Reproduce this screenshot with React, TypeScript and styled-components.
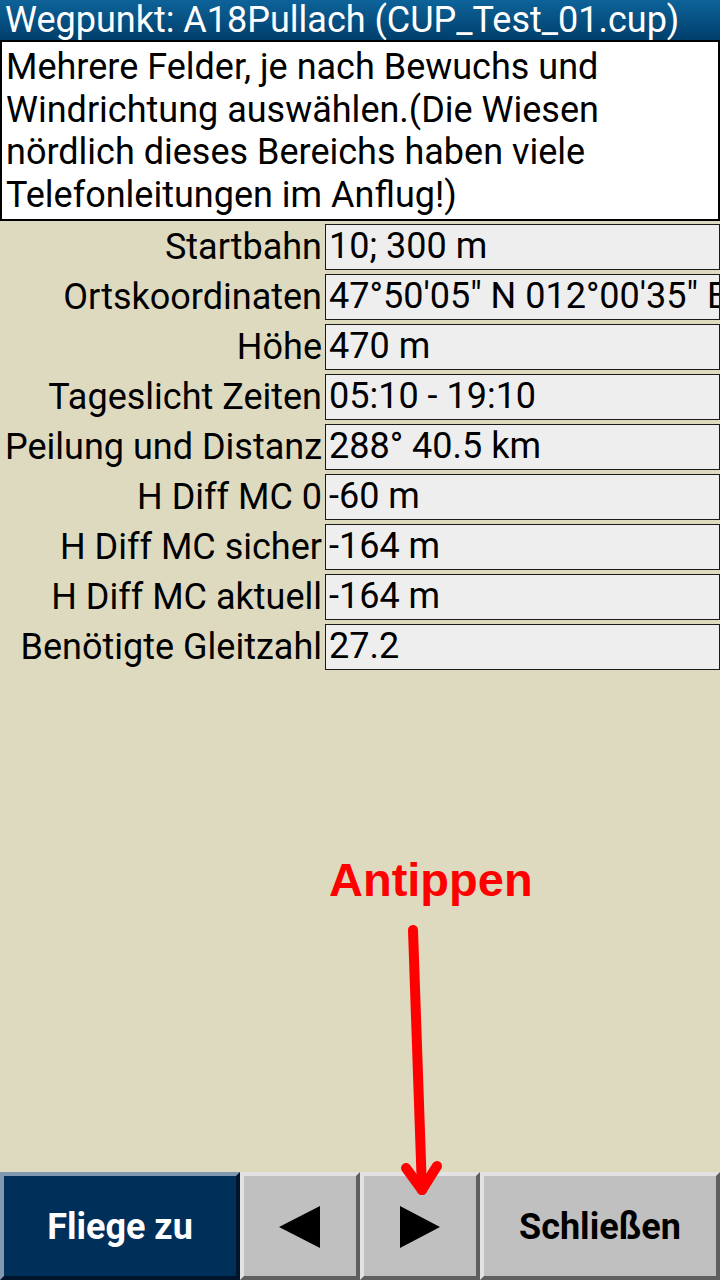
import React from "react";
import styled, { createGlobalStyle } from "styled-components";

const Global = createGlobalStyle`
  html, body { margin: 0; padding: 0; }
  body { background: #dedac0; font-family: Roboto, "Noto Sans", sans-serif; }
`;

const Page = styled.div`
  position: relative;
  width: 720px;
  height: 1280px;
  display: flex;
  flex-direction: column;
  background: #dedac0;
  overflow: hidden;
`;

const TitleBar = styled.div`
  height: 40px;
  background: linear-gradient(#0d6399, #003f6c);
  color: #fff;
  font-size: 36px;
  line-height: 40px;
  padding-left: 5px;
  white-space: nowrap;
  overflow: hidden;
`;

const Description = styled.div`
  height: 181px;
  box-sizing: border-box;
  background: #fff;
  border: 2px solid #000;
  padding: 4px 4px 0 4px;
  font-size: 36px;
  line-height: 42.5px;
  color: #000;
`;

const Rows = styled.div`
  display: flex;
  flex-direction: column;
  gap: 4px;
  padding-top: 3px;
`;

const Row = styled.div`
  display: flex;
  height: 46px;
`;

const Label = styled.div`
  width: 325px;
  box-sizing: border-box;
  padding-right: 3px;
  font-size: 36px;
  line-height: 46px;
  color: #000;
  text-align: right;
  white-space: nowrap;
`;

const Value = styled.div`
  flex: 1;
  box-sizing: border-box;
  background: #eeeeee;
  border: 1.5px solid #1a1a1a;
  font-size: 36px;
  line-height: 43px;
  padding-left: 3px;
  color: #000;
  white-space: nowrap;
  overflow: hidden;
`;

const Spacer = styled.div`
  flex: 1;
`;

const ButtonBar = styled.div`
  height: 108px;
  display: flex;
`;

const Button = styled.div<{ $w: number; $primary?: boolean }>`
  width: ${(p) => p.$w}px;
  box-sizing: border-box;
  border: 4px solid;
  border-color: ${(p) =>
    p.$primary
      ? "#8297b0 #00152c #00152c #8297b0"
      : "#e2e2e2 #5f5f5f #5f5f5f #e2e2e2"};
  background: ${(p) => (p.$primary ? "#002f5a" : "#c0c0c0")};
  color: ${(p) => (p.$primary ? "#fff" : "#000")};
  display: flex;
  align-items: center;
  justify-content: center;
  font-size: 36px;
  font-weight: bold;
  padding-top: 2px;
`;

const Annotation = styled.div`
  position: absolute;
  left: 329px;
  top: 850px;
  color: #ff0000;
  font-family: "Liberation Sans", Arial, sans-serif;
  font-weight: bold;
  font-size: 47px;
  line-height: 60px;
`;

const ArrowSvg = styled.svg`
  position: absolute;
  left: 390px;
  top: 920px;
`;

const rows: { label: string; value: string }[] = [
  { label: "Startbahn", value: "10; 300 m" },
  { label: "Ortskoordinaten", value: "47°50'05\" N 012°00'35\" E" },
  { label: "Höhe", value: "470 m" },
  { label: "Tageslicht Zeiten", value: "05:10 - 19:10" },
  { label: "Peilung und Distanz", value: "288° 40.5 km" },
  { label: "H Diff MC 0", value: "-60 m" },
  { label: "H Diff MC sicher", value: "-164 m" },
  { label: "H Diff MC aktuell", value: "-164 m" },
  { label: "Benötigte Gleitzahl", value: "27.2" },
];

function Triangle({ dir }: { dir: "left" | "right" }) {
  return (
    <svg width="42" height="44" viewBox="0 0 42 44">
      {dir === "left" ? (
        <polygon points="0,22 41,1 41,43" fill="#000" />
      ) : (
        <polygon points="1,1 41,22 1,43" fill="#000" />
      )}
    </svg>
  );
}

export default function App() {
  return (
    <>
      <Global />
      <Page>
        <TitleBar>Wegpunkt: A18Pullach (CUP_Test_01.cup)</TitleBar>
        <Description>
          Mehrere Felder, je nach Bewuchs und Windrichtung auswählen.(Die Wiesen
          nördlich dieses Bereichs haben viele Telefonleitungen im Anflug!)
        </Description>
        <Rows>
          {rows.map((r) => (
            <Row key={r.label}>
              <Label>{r.label}</Label>
              <Value>{r.value}</Value>
            </Row>
          ))}
        </Rows>
        <Spacer />
        <ButtonBar>
          <Button $w={240} $primary>
            Fliege zu
          </Button>
          <Button $w={120}>
            <Triangle dir="left" />
          </Button>
          <Button $w={120}>
            <Triangle dir="right" />
          </Button>
          <Button $w={240}>Schließen</Button>
        </ButtonBar>
        <Annotation>Antippen</Annotation>
        <ArrowSvg width="60" height="280" viewBox="0 0 60 280">
          <g
            stroke="#ff0000"
            strokeWidth="10"
            strokeLinecap="round"
            strokeLinejoin="round"
            fill="none"
          >
            <line x1="23" y1="10" x2="32" y2="270" />
            <polyline points="16,248 32,270 47,246" />
          </g>
        </ArrowSvg>
      </Page>
    </>
  );
}
